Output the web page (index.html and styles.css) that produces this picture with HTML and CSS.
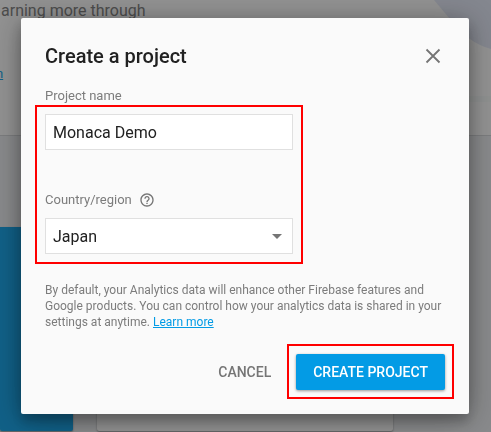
FILE: index.html
```html
<!DOCTYPE html>
<html lang="en">
<head>
<meta charset="utf-8">
<title>Create a project</title>
<link rel="stylesheet" href="styles.css">
</head>
<body>
<main class="page">
  <section class="hero">
    <p class="hero-text">arning more through</p>
    <a class="hero-link" href="#">n</a>
    <svg class="hero-art" width="60" height="110" viewBox="0 0 60 110" aria-hidden="true">
      <path d="M3 0L19 19Q37 43 60 49V0Z" fill="#dfe4f3"/>
      <path d="M34 96H60V102H34Z" fill="#f3f7f6"/>
    </svg>
  </section>
  <section class="projects">
    <div class="card card-new"></div>
    <div class="card"></div>
  </section>
</main>
<div class="backdrop">
  <form class="dialog" role="dialog" aria-labelledby="dialog-title">
    <header class="dialog-header">
      <h1 class="dialog-title" id="dialog-title">Create a project</h1>
      <button class="close" type="button" aria-label="Close">
        <svg width="24" height="24" viewBox="0 0 24 24" aria-hidden="true"><path d="M5.500 5.500L18.500 18.500M18.500 5.500L5.500 18.500" stroke="#757575" stroke-width="1.800" fill="none"/></svg>
      </button>
    </header>
    <div class="fields">
      <div class="field">
        <label class="label" for="name">Project name</label>
        <input class="control" id="name" type="text" value="Monaca Demo">
      </div>
      <div class="field">
        <div class="label-row">
          <label class="label" for="region">Country/region</label>
          <svg width="16" height="16" viewBox="0 0 24 24" aria-hidden="true"><path fill="#757575" d="M11 18h2v-2h-2v2zm1-16C6.480 2 2 6.480 2 12s4.480 10 10 10 10-4.480 10-10S17.520 2 12 2zm0 18c-4.410 0-8-3.590-8-8s3.590-8 8-8 8 3.590 8 8-3.590 8-8 8zm0-14c-2.210 0-4 1.790-4 4h2c0-1.100.9-2 2-2s2 .9 2 2c0 2-3 1.750-3 5h2c0-2.250 3-2.500 3-5 0-2.210-1.790-4-4-4z"/></svg>
        </div>
        <div class="select-wrap">
          <select class="control" id="region"><option>Japan</option></select>
          <svg class="caret" width="10" height="5" viewBox="0 0 10 5" aria-hidden="true"><path d="M0 0H10L5 5Z" fill="#757575"/></svg>
        </div>
      </div>
    </div>
    <p class="note">By default, your Analytics data will enhance other Firebase features and Google products. You can control how your analytics data is shared in your settings at anytime. <a class="note-link" href="#">Learn more</a></p>
    <div class="actions">
      <button class="button" type="button">CANCEL</button>
      <div class="marked">
        <button class="button button-primary" type="submit">CREATE PROJECT</button>
      </div>
    </div>
  </form>
</div>
</body>
</html>
```
FILE: styles.css
```css
* {
  box-sizing: border-box;
}

body {
  margin: 0;
  min-height: 100vh;
  overflow: hidden;
  font-family: Roboto, sans-serif;
  background: #e8eaed;
}

.hero {
  position: relative;
  height: 136px;
  background: #fafafa;
  border-bottom: 1px solid #cfd1d4;
}

.hero-text {
  margin: 0;
  padding-left: 1px;
  font-size: 16px;
  line-height: 22px;
  color: #757575;
}

.hero-link {
  display: block;
  margin-top: 42px;
  margin-left: -4px;
  font-size: 13px;
  line-height: 20px;
  color: #039be5;
}

.hero-art {
  position: absolute;
  top: 0;
  right: 0;
}

.projects {
  display: grid;
  grid-template-columns: 73px minmax(0, 296px);
  gap: 24px;
  padding-top: 91px;
}

.card {
  height: 204px;
  background: #fafafa;
  border-radius: 0 0 2px 2px;
  box-shadow: 0 1px 2px rgba(0, 0, 0, 0.4);
}

.card-new {
  background: #039be5;
}

.backdrop {
  position: fixed;
  inset: 0;
  display: flex;
  align-items: center;
  justify-content: center;
  padding: 0 22px 0 21px;
  background: rgba(33, 33, 33, 0.48);
}

.dialog {
  flex: 1;
  max-width: 448px;
  padding: 24px;
  background: #fafafa;
  border-radius: 2px;
  box-shadow: 0 8px 10px rgba(0, 0, 0, 0.14), 0 4px 28px rgba(0, 0, 0, 0.4);
}

.dialog-header {
  display: flex;
  align-items: center;
  justify-content: space-between;
}

.dialog-title {
  margin: 0;
  font-size: 20px;
  font-weight: 500;
  line-height: 28px;
  color: #212121;
}

.close {
  height: 24px;
  padding: 0;
  border: 0;
  background: none;
}

.close svg {
  display: block;
}

.fields {
  position: relative;
  display: grid;
  gap: 42px;
  max-width: 248px;
  margin-top: 18px;
}

.fields::after,
.marked::after {
  content: "";
  position: absolute;
  border: 2px solid #f00;
  pointer-events: none;
}

.fields::after {
  inset: 17px -10px -10px;
}

.marked {
  position: relative;
}

.marked::after {
  inset: -10px -9px -9px;
}

.label-row {
  display: flex;
  align-items: center;
  gap: 7px;
}

.label {
  display: block;
  font-size: 13px;
  line-height: 16px;
  color: #7c7c7c;
}

.control {
  display: block;
  width: 100%;
  height: 36px;
  margin-top: 10px;
  padding: 0 7px;
  border: 1px solid #e0e0e0;
  border-radius: 0;
  appearance: none;
  background: #fff;
  color: #212121;
  font-family: inherit;
  font-size: 16px;
}

.select-wrap {
  position: relative;
}

.caret {
  position: absolute;
  right: 11px;
  bottom: 15px;
}

.note {
  margin: 28px 0 24px;
  font-size: 12px;
  line-height: 16px;
  color: #7c7c7c;
}

.note-link {
  color: #039be5;
}

.actions {
  display: flex;
  justify-content: flex-end;
  gap: 8px;
}

.button {
  height: 36px;
  padding: 0 17px;
  border: 0;
  border-radius: 2px;
  background: none;
  color: #757575;
  font-family: inherit;
  font-size: 14px;
  font-weight: 500;
}

.button-primary {
  display: block;
  background: #039be5;
  color: #fff;
  box-shadow: 0 1px 3px rgba(0, 0, 0, 0.4);
}
```
